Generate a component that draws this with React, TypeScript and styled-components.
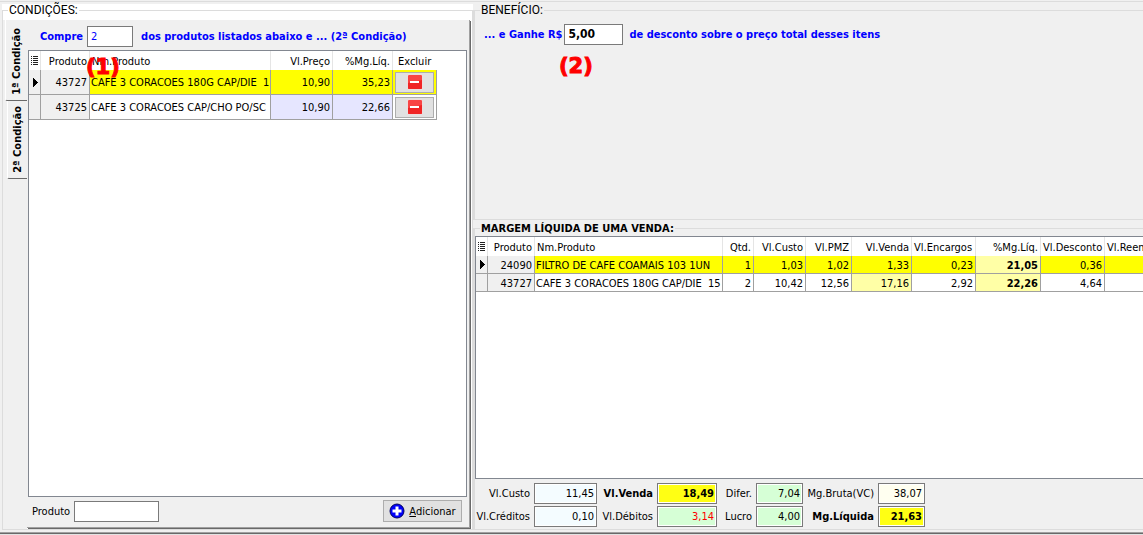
import React from "react";
import styled, { createGlobalStyle } from "styled-components";

const line = "#dcdcdc";
const face = "#f0f0f0";
const edge = "#7a7a7a";

const GlobalStyle = createGlobalStyle`
  * { box-sizing: border-box; }
  body {
    margin: 0;
    background: ${face};
    color: #000;
    font: 11px/13px "DejaVu Sans Condensed", "DejaVu Sans", sans-serif;
  }
  input, button { font: inherit; color: inherit; }
`;

const Window = styled.div`
  display: flex;
  flex-direction: column;
  height: 100vh;
  min-height: 360px;
  overflow: hidden;
`;

const TopEdge = styled.div`
  height: 2px;
  margin-bottom: 2px;
  border-bottom: 1px solid ${line};
`;

const BottomEdge = styled.div`
  height: 3px;
  border-top: 1px solid #a0a0a0;
  border-bottom: 1px solid #e3e3e3;
  background: #696969;
`;

const Columns = styled.main`
  flex: 1;
  min-height: 0;
  display: grid;
  grid-template-columns: minmax(0, 473fr) minmax(0, 670fr);
  grid-template-rows: minmax(0, 1fr);
  padding-bottom: 2px;
`;

const LeftSide = styled.div`
  display: flex;
  min-height: 0;
  padding-left: 2px;
  background: linear-gradient(to right, ${face} 2px, #fff 2px);
`;

const RightSide = styled.div`
  display: flex;
  flex-direction: column;
  gap: 2px;
  min-height: 0;
`;

const Group = styled.fieldset<{ $tall?: boolean }>`
  flex: ${(p) => (p.$tall ? "1 1 0" : "none")};
  display: flex;
  flex-direction: column;
  min-width: 0;
  min-height: 0;
  margin: 0;
  padding: 0;
  border: 1px solid ${line};
`;

const BenefitGroup = styled(Group)`
  height: 216px;
  border-left-width: 2px;
  border-right: 0;
`;

const MarginGroup = styled(Group)`
  padding-top: 1px;
  border-left-width: 2px;
  border-right: 0;
`;

const Legend = styled.legend<{ $bold?: boolean }>`
  margin-left: 5px;
  padding: 0 1px;
  line-height: 13px;
  font-family: ${(p) => (p.$bold ? "inherit" : '"Roboto", sans-serif')};
  font-size: ${(p) => (p.$bold ? "11px" : "12px")};
  font-weight: ${(p) => (p.$bold ? 700 : 400)};
`;

const TabBook = styled.div`
  flex: 1;
  display: flex;
  min-height: 0;
  margin-top: 3px;
`;

const TabStrip = styled.div`
  width: 24px;
  flex: none;
  display: flex;
  flex-direction: column;
  align-items: flex-end;
  background: ${face};
`;

const Tab = styled.button<{ $active?: boolean }>`
  display: flex;
  align-items: center;
  justify-content: center;
  width: ${(p) => (p.$active ? "22px" : "20px")};
  height: ${(p) => (p.$active ? "81px" : "78px")};
  padding: ${(p) => (p.$active ? "3px" : 0)} 0 0;
  border: 0;
  border-left: 1px solid #fff;
  border-bottom: 1px solid #696969;
  border-radius: 0 0 0 2px;
  background: ${face};
  font-weight: 700;

  span {
    writing-mode: vertical-rl;
    transform: rotate(180deg);
  }
`;

const TabPage = styled.div`
  flex: 1;
  min-width: 0;
  display: flex;
  flex-direction: column;
  margin: 0 2px 1px 0;
  padding: 6px 2px 5px 1px;
  background: ${face};
  border: solid #a0a0a0;
  border-width: 0 1px 1px 0;
  box-shadow: 1px 1px 0 #696969;
`;

const Sentence = styled.div`
  position: relative;
  display: flex;
  align-items: center;
  color: #00f;
  font-weight: 700;
  white-space: nowrap;
`;

const BuyLine = styled(Sentence)`
  height: 21px;
  margin-bottom: 3px;
  padding-left: 12px;
  gap: 4px;
`;

const GainLine = styled(Sentence)`
  height: 22px;
  margin-top: 6px;
  padding-left: 9px;
  gap: 2px;
`;

const After = styled.span`
  margin-left: 4px;
`;

const TextBox = styled.input<{ $w: number; $strong?: boolean }>`
  width: ${(p) => p.$w}px;
  height: 21px;
  padding: 0 3px;
  border: 1px solid ${edge};
  border-radius: 0;
  background: #fff;
  outline: 0;
  color: ${(p) => (p.$strong ? "#000" : "#00f")};
  font-size: ${(p) => (p.$strong ? "12px" : "11px")};
  font-weight: ${(p) => (p.$strong ? 700 : 400)};
`;

const Callout = styled.span`
  position: absolute;
  z-index: 1;
  color: #f00;
  font: 700 21px/24px "DejaVu Sans", sans-serif;
  -webkit-text-stroke: 1px #f00;
  pointer-events: none;
`;

const BuyCallout = styled(Callout)`
  top: 29px;
  left: 58px;
`;

const GainCallout = styled(Callout)`
  top: 31px;
  left: 84px;
`;

const GridBox = styled.div<{ $open?: boolean }>`
  flex: 1;
  min-height: 0;
  overflow: hidden;
  background: #fff;
  border: 1px solid #828790;
  border-right-width: ${(p) => (p.$open ? 0 : "1px")};
`;

const Table = styled.table<{ $w: number }>`
  width: ${(p) => p.$w}px;
  table-layout: fixed;
  border-collapse: separate;
  border-spacing: 0;
`;

const Th = styled.th<{ $left?: boolean; $indent?: number }>`
  height: 19px;
  padding: 2px 2px 0 ${(p) => p.$indent ?? 2}px;
  border-right: 1px solid #e5e5e5;
  font-weight: 400;
  text-align: ${(p) => (p.$left ? "left" : "right")};
  white-space: nowrap;
  overflow: hidden;
`;

const LastTh = styled(Th)`
  border-right-color: #fff;
`;

const Td = styled.td<{ $bg?: string; $left?: boolean; $bold?: boolean; $h: number }>`
  height: ${(p) => p.$h}px;
  padding: 1px 2px 0 ${(p) => (p.$left ? "1px" : "2px")};
  border-right: 1px solid #a0a0a0;
  border-bottom: 1px solid #a0a0a0;
  background: ${(p) => p.$bg ?? "#fff"};
  font-weight: ${(p) => (p.$bold ? 700 : 400)};
  text-align: ${(p) => (p.$left ? "left" : "right")};
  white-space: pre;
  overflow: hidden;
`;

const IconTd = styled(Td)`
  padding: 0;
  line-height: 0;
  text-align: center;
`;

const IconTh = styled(Th)`
  padding: 0;
  line-height: 0;
  text-align: center;
`;

const RemoveButton = styled.button`
  display: flex;
  align-items: center;
  justify-content: center;
  width: 39px;
  height: 21px;
  margin: 0 auto;
  padding: 0;
  border: 1px solid #adadad;
  background: #e1e1e1;
`;

const Footer = styled.div`
  display: flex;
  align-items: center;
  height: 22px;
  margin-top: 3px;
  padding: 0 5px 0 4px;
  gap: 4px;
`;

const AddButton = styled.button`
  display: flex;
  align-items: center;
  justify-content: center;
  gap: 4px;
  width: 79px;
  height: 22px;
  margin-left: auto;
  padding: 0;
  border: 1px solid #adadad;
  background: #e1e1e1;
`;

const Totals = styled.div`
  display: grid;
  grid-template-columns: 55px 63px 52px 60px 31px 47px 67px 47px;
  grid-auto-rows: 21px;
  gap: 2px 4px;
  align-items: center;
  margin: 4px 0 2px;
`;

const TotalLabel = styled.label<{ $bold?: boolean }>`
  display: flex;
  justify-content: flex-end;
  white-space: nowrap;
  font-weight: ${(p) => (p.$bold ? 700 : 400)};
`;

const TotalBox = styled.input<{ $bg: string; $bold?: boolean; $ink?: string }>`
  width: 100%;
  height: 21px;
  padding: 0 2px;
  border: 1px solid ${edge};
  border-radius: 0;
  outline: 0;
  background: ${(p) => p.$bg};
  box-shadow: inset 0 0 0 1px #fff;
  color: ${(p) => p.$ink ?? "#000"};
  font-weight: ${(p) => (p.$bold ? 700 : 400)};
  text-align: right;
`;

const MenuIcon = () => (
  <svg width="9" height="11" viewBox="0 0 9 11" shapeRendering="crispEdges" aria-hidden="true">
    <path d="M1 1h1v1h-1zM3 1h5v1h-5zM1 3h1v1h-1zM3 3h5v1h-5zM1 5h1v1h-1zM3 5h5v1h-5zM1 7h1v1h-1zM3 7h5v1h-5zM1 9h1v1h-1zM3 9h5v1h-5z" fill="#222" />
  </svg>
);

const RowArrow = () => (
  <svg width="9" height="11" viewBox="0 0 9 11" shapeRendering="crispEdges" aria-hidden="true">
    <path d="M3 1h1v9h-1zM4 2h1v7h-1zM5 3h1v5h-1zM6 4h1v3h-1zM7 5h1v1h-1z" fill="#000" />
  </svg>
);

const MinusIcon = () => (
  <svg width="16" height="16" viewBox="0 0 16 16" aria-hidden="true">
    <rect x="0.5" y="0.5" width="15" height="15" rx="1.5" fill="#fff" stroke="#ecdcdc" />
    <rect x="1" y="1" width="14" height="14" rx="1" fill="#f84444" />
    <path d="M1 9l14-3v8a1 1 0 0 1-1 1H2a1 1 0 0 1-1-1z" fill="#f02424" />
    <rect x="3" y="7" width="9" height="2" fill="#fff" />
  </svg>
);

const PlusIcon = () => (
  <svg width="16" height="16" viewBox="0 0 16 16" aria-hidden="true">
    <circle cx="8" cy="8" r="7" fill="#0000f8" stroke="#000060" />
    <path d="M6.5 3.5h3v3h3v3h-3v3h-3v-3h-3v-3h3z" fill="#fff" />
  </svg>
);

const yellow = "#ff0";
const pale = "#ffffa6";
const lilac = "#e6e6ff";

const products = [
  { code: "43727", name: "CAFE 3 CORACOES 180G CAP/DIE  1", price: "10,90", margin: "35,23" },
  { code: "43725", name: "CAFE 3 CORACOES CAP/CHO PO/SC", price: "10,90", margin: "22,66" },
];

const sale = [
  ["24090", "FILTRO DE CAFE COAMAIS 103 1UN", "1", "1,03", "1,02", "1,33", "0,23", "21,05", "0,36", ""],
  ["43727", "CAFE 3 CORACOES 180G CAP/DIE  15", "2", "10,42", "12,56", "17,16", "2,92", "22,26", "4,64", ""],
];

const saleHeads = ["Produto", "Nm.Produto", "Qtd.", "Vl.Custo", "Vl.PMZ", "Vl.Venda", "Vl.Encargos", "%Mg.Líq.", "Vl.Desconto", "Vl.Reem"];
const saleWidths = [12, 47, 188, 31, 52, 46, 60, 64, 65, 64, 64];
const productWidths = [12, 49, 181, 62, 60, 44];

const totals = [
  { id: "custo", label: "Vl.Custo", value: "11,45", bg: "#f4fcff" },
  { id: "venda", label: "Vl.Venda", value: "18,49", bg: "#ffff14", bold: true },
  { id: "difer", label: "Difer.", value: "7,04", bg: "#d6ffd6" },
  { id: "bruta", label: "Mg.Bruta(VC)", value: "38,07", bg: "#fffff0" },
  { id: "creditos", label: "Vl.Créditos", value: "0,10", bg: "#f4fcff" },
  { id: "debitos", label: "Vl.Débitos", value: "3,14", bg: "#d6ffd6", ink: "#f00" },
  { id: "lucro", label: "Lucro", value: "4,00", bg: "#d6ffd6" },
  { id: "liquida", label: "Mg.Líquida", value: "21,63", bg: "#ffff14", bold: true },
];

const Cols = ({ widths }: { widths: number[] }) => (
  <colgroup>
    {widths.map((w, i) => (
      <col key={i} width={w} />
    ))}
  </colgroup>
);

const sum = (widths: number[]) => widths.reduce((a, b) => a + b, 0);

function saleColor(row: number, col: number) {
  if (col === 0) return face;
  if (col === 7) return pale;
  if (row === 0) return yellow;
  return col === 5 ? pale : "#fff";
}

function ProductTable() {
  return (
    <Table $w={sum(productWidths)}>
      <Cols widths={productWidths} />
      <thead>
        <tr>
          <IconTh><MenuIcon /></IconTh>
          <Th>Produto</Th>
          <Th $left>Nm.Produto</Th>
          <Th>Vl.Preço</Th>
          <Th>%Mg.Líq.</Th>
          <LastTh $left $indent={5}>Excluir</LastTh>
        </tr>
      </thead>
      <tbody>
        {products.map((p, i) => {
          const on = i === 0;
          return (
            <tr key={p.code}>
              <IconTd $h={25} $bg={face}>{on && <RowArrow />}</IconTd>
              <Td $h={25} $bg={face}>{p.code}</Td>
              <Td $h={25} $left $bg={on ? yellow : "#fff"}>{p.name}</Td>
              <Td $h={25} $bg={on ? yellow : lilac}>{p.price}</Td>
              <Td $h={25} $bg={on ? yellow : lilac}>{p.margin}</Td>
              <IconTd $h={25} $bg={on ? yellow : "#fff"}>
                <RemoveButton type="button" aria-label={`Excluir ${p.code}`}><MinusIcon /></RemoveButton>
              </IconTd>
            </tr>
          );
        })}
      </tbody>
    </Table>
  );
}

function SaleTable() {
  return (
    <Table $w={sum(saleWidths)}>
      <Cols widths={saleWidths} />
      <thead>
        <tr>
          <IconTh><MenuIcon /></IconTh>
          {saleHeads.map((h, i) => (
            <Th key={h} $left={i === 1 || i === 6 || i > 7}>{h}</Th>
          ))}
        </tr>
      </thead>
      <tbody>
        {sale.map((row, r) => (
          <tr key={row[0]}>
            <IconTd $h={18} $bg={face}>{r === 0 && <RowArrow />}</IconTd>
            {row.map((cell, c) => (
              <Td key={c} $h={18} $left={c === 1} $bold={c === 7} $bg={saleColor(r, c)}>{cell}</Td>
            ))}
          </tr>
        ))}
      </tbody>
    </Table>
  );
}

export default function App() {
  return (
    <>
      <GlobalStyle />
      <Window>
        <TopEdge />
        <Columns>
          <LeftSide>
            <Group $tall>
              <Legend>CONDIÇÕES:</Legend>
              <TabBook>
                <TabStrip>
                  <Tab type="button" $active><span>1ª Condição</span></Tab>
                  <Tab type="button"><span>2ª Condição</span></Tab>
                </TabStrip>
                <TabPage>
                  <BuyLine>
                    <label htmlFor="quantidade">Compre</label>
                    <TextBox id="quantidade" $w={46} defaultValue="2" />
                    <After>dos produtos listados abaixo e ... (2ª Condição)</After>
                    <BuyCallout>(1)</BuyCallout>
                  </BuyLine>
                  <GridBox><ProductTable /></GridBox>
                  <Footer>
                    <label htmlFor="produto">Produto</label>
                    <TextBox id="produto" $w={85} />
                    <AddButton type="button">
                      <PlusIcon />
                      <span><u>A</u>dicionar</span>
                    </AddButton>
                  </Footer>
                </TabPage>
              </TabBook>
            </Group>
          </LeftSide>
          <RightSide>
            <BenefitGroup>
              <Legend>BENEFÍCIO:</Legend>
              <GainLine>
                <label htmlFor="desconto">... e Ganhe R$</label>
                <TextBox id="desconto" $w={59} $strong defaultValue="5,00" />
                <After>de desconto sobre o preço total desses itens</After>
                <GainCallout>(2)</GainCallout>
              </GainLine>
            </BenefitGroup>
            <MarginGroup $tall>
              <Legend $bold>MARGEM LÍQUIDA DE UMA VENDA:</Legend>
              <GridBox $open><SaleTable /></GridBox>
              <Totals>
                {totals.map((t) => (
                  <React.Fragment key={t.id}>
                    <TotalLabel htmlFor={t.id} $bold={t.bold}>{t.label}</TotalLabel>
                    <TotalBox id={t.id} $bg={t.bg} $bold={t.bold} $ink={t.ink} defaultValue={t.value} />
                  </React.Fragment>
                ))}
              </Totals>
            </MarginGroup>
          </RightSide>
        </Columns>
        <BottomEdge />
      </Window>
    </>
  );
}
